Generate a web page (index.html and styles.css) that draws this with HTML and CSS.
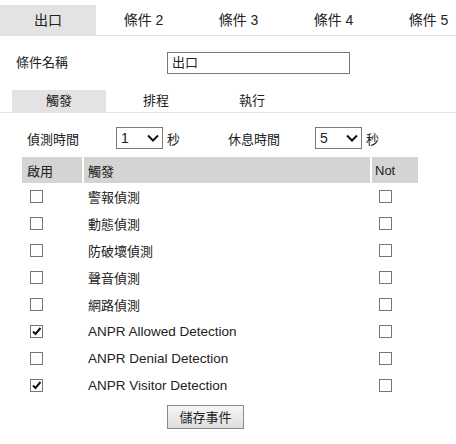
FILE: index.html
```html
<!DOCTYPE html>
<html lang="zh-Hant">
<head>
<meta charset="utf-8">
<link rel="stylesheet" href="styles.css">
</head>
<body>
<div class="tabs">
  <div class="tab active">出口</div>
  <div class="tab">條件 2</div>
  <div class="tab">條件 3</div>
  <div class="tab">條件 4</div>
  <div class="tab">條件 5</div>
</div>

<div class="name-row">
  <span class="name-label">條件名稱</span>
  <div class="name-input">出口</div>
</div>

<div class="subtabs">
  <div class="subtab active">觸發</div>
  <div class="subtab">排程</div>
  <div class="subtab">執行</div>
</div>

<div class="time-row">
  <span class="time-label">偵測時間</span>
  <div class="select"><span>1</span><svg class="chev" width="12" height="8" viewBox="0 0 12 8"><path d="M1 1.5 L6 6.5 L11 1.5" fill="none" stroke="#111" stroke-width="2"/></svg></div>
  <span class="unit">秒</span>
  <span class="time-label rest">休息時間</span>
  <div class="select"><span>5</span><svg class="chev" width="12" height="8" viewBox="0 0 12 8"><path d="M1 1.5 L6 6.5 L11 1.5" fill="none" stroke="#111" stroke-width="2"/></svg></div>
  <span class="unit">秒</span>
</div>

<table class="events">
  <colgroup>
    <col class="w1"><col class="w2"><col class="w3">
  </colgroup>
  <thead>
    <tr><th class="c1">啟用</th><th class="c2">觸發</th><th class="c3">Not</th></tr>
  </thead>
  <tbody>
    <tr><td class="c1"><span class="cb"></span></td><td class="c2">警報偵測</td><td class="c3"><span class="cb"></span></td></tr>
    <tr><td class="c1"><span class="cb"></span></td><td class="c2">動態偵測</td><td class="c3"><span class="cb"></span></td></tr>
    <tr><td class="c1"><span class="cb"></span></td><td class="c2">防破壞偵測</td><td class="c3"><span class="cb"></span></td></tr>
    <tr><td class="c1"><span class="cb"></span></td><td class="c2">聲音偵測</td><td class="c3"><span class="cb"></span></td></tr>
    <tr><td class="c1"><span class="cb"></span></td><td class="c2">網路偵測</td><td class="c3"><span class="cb"></span></td></tr>
    <tr><td class="c1"><span class="cb"><svg width="11" height="11" viewBox="0 0 11 11"><path d="M2 5.5 L4.5 8 L9.5 2" fill="none" stroke="#111" stroke-width="2"/></svg></span></td><td class="c2 latin">ANPR Allowed Detection</td><td class="c3"><span class="cb"></span></td></tr>
    <tr><td class="c1"><span class="cb"></span></td><td class="c2 latin">ANPR Denial Detection</td><td class="c3"><span class="cb"></span></td></tr>
    <tr><td class="c1"><span class="cb"><svg width="11" height="11" viewBox="0 0 11 11"><path d="M2 5.5 L4.5 8 L9.5 2" fill="none" stroke="#111" stroke-width="2"/></svg></span></td><td class="c2 latin">ANPR Visitor Detection</td><td class="c3"><span class="cb"></span></td></tr>
  </tbody>
</table>

<div class="actions">
  <button class="save">儲存事件</button>
</div>
</body>
</html>
```

FILE: styles.css
```css
html, body {
  margin: 0;
  padding: 0;
  background: #fff;
}
body {
  font-family: "Liberation Sans", "Noto Sans CJK TC", sans-serif;
  font-size: 13px;
  color: #222;
  width: 456px;
  overflow: hidden;
}

.tabs {
  display: flex;
  margin-top: 5px;
  height: 30px;
  border-bottom: 1px solid #e2e2e2;
  overflow: hidden;
}
.tab {
  flex: 0 0 95px;
  font-size: 14px;
  line-height: 30px;
  text-align: center;
}
.tab.active {
  flex-basis: 96px;
  background: #e3e3e3;
}

.name-row {
  display: flex;
  align-items: center;
  margin-top: 16px;
  padding-left: 16px;
}
.name-label {
  width: 151px;
  line-height: 22px;
}
.name-input {
  box-sizing: border-box;
  width: 183px;
  height: 22px;
  border: 1px solid #7a7a7a;
  padding-left: 4px;
  line-height: 20px;
}

.subtabs {
  display: flex;
  margin-top: 16px;
  padding-left: 12px;
  height: 22px;
  border-bottom: 1px solid #e2e2e2;
}
.subtab {
  flex: 0 0 96px;
  line-height: 22px;
  text-align: center;
}
.subtab.active {
  flex-basis: 94px;
  margin-right: 2px;
  background: #e3e3e3;
}

.time-row {
  display: flex;
  align-items: center;
  margin-top: 14px;
  padding-left: 27px;
  height: 22px;
}
.time-label {
  width: 89px;
}
.time-label.rest {
  width: 87px;
}
.select {
  box-sizing: border-box;
  display: flex;
  align-items: center;
  justify-content: space-between;
  width: 47px;
  height: 22px;
  border: 1px solid #7a7a7a;
  padding: 0 3px 0 4px;
  font-size: 14px;
}
.unit {
  margin-left: 4px;
  width: 61px;
}
.unit:last-child {
  width: auto;
}

.events {
  margin-top: 8px;
  margin-left: 20px;
  width: 400px;
  table-layout: fixed;
  border-collapse: separate;
  border-spacing: 2px 0;
}
.events col.w1 { width: 60px; }
.events col.w2 { width: 286px; }
.events col.w3 { width: 46px; }
.events th {
  background: #d4d4d4;
  height: 26px;
  padding: 0 0 0 4px;
  font-weight: normal;
  text-align: left;
  vertical-align: middle;
}
.events th.c1 { padding-left: 5px; }
.events th.c3 { padding-left: 3px; }
.events td {
  height: 27px;
  padding: 0;
  vertical-align: middle;
}
.events td.c1 { padding-left: 8px; }
.events td.c2 { padding-left: 4px; }
.events td.c3 { padding-left: 7px; }
.events td.latin {
  font-size: 13.5px;
}

.cb {
  box-sizing: border-box;
  display: flex;
  align-items: center;
  justify-content: center;
  width: 13px;
  height: 13px;
  border: 1px solid #767676;
  background: #fff;
}

.actions {
  padding-left: 167px;
  margin-top: 6px;
}
.save {
  box-sizing: border-box;
  width: 77px;
  height: 24px;
  border: 1px solid #8a8a8a;
  border-radius: 0;
  background: linear-gradient(#f6f6f6, #dedede);
  font-family: "Noto Sans CJK TC", sans-serif;
  font-size: 13px;
  color: #222;
  padding: 0;
  line-height: 22px;
}
```
